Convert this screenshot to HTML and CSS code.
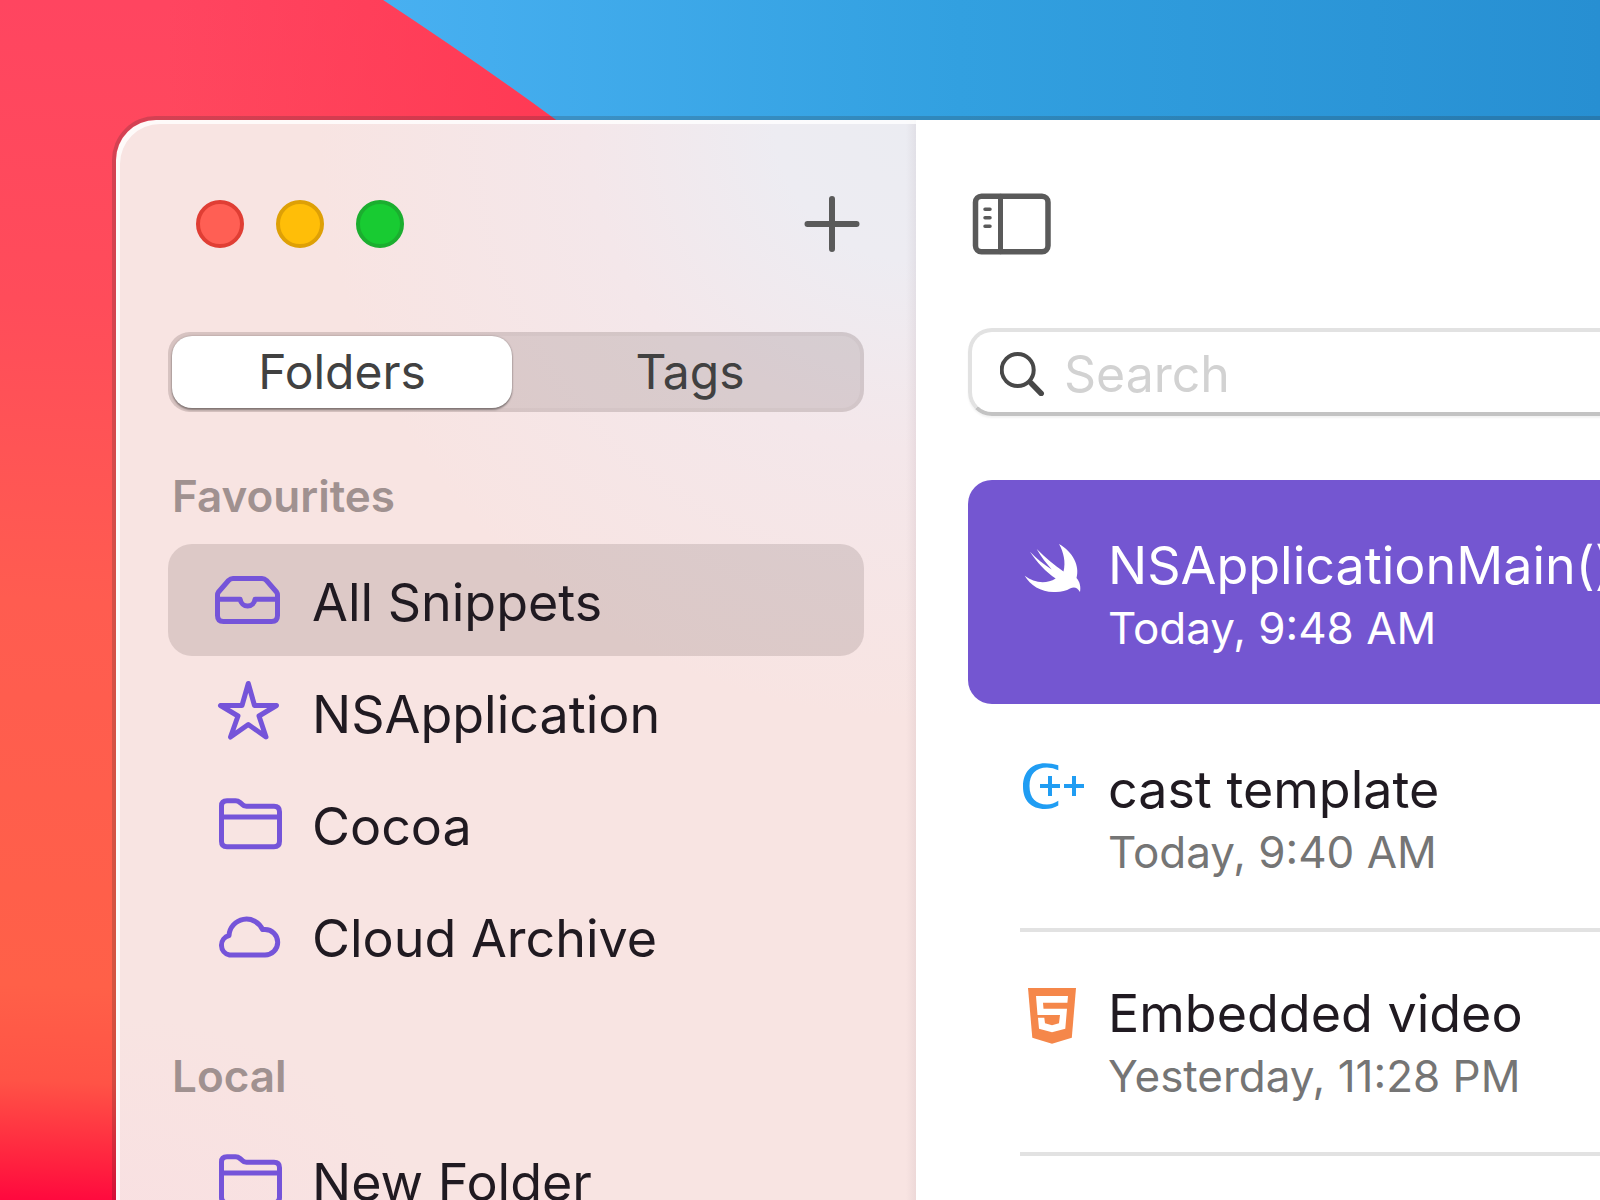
FILE: index.html
```html
<!DOCTYPE html>
<html lang="en">
<head>
<meta charset="utf-8">
<title>Snippets</title>
<link rel="stylesheet" href="styles.css">
</head>
<body>
<svg class="wallpaper" viewBox="0 0 1600 1200" preserveAspectRatio="none" aria-hidden="true">
  <defs>
    <linearGradient id="sky" x1="0" y1="0" x2="1" y2="0">
      <stop offset="0.24" stop-color="#48b0f1"/>
      <stop offset="0.6" stop-color="#32a0e0"/>
      <stop offset="1" stop-color="#278fd2"/>
    </linearGradient>
    <linearGradient id="dune" gradientUnits="userSpaceOnUse" x1="40" y1="0" x2="0" y2="1200">
      <stop offset="0" stop-color="#ff4560"/>
      <stop offset="0.25" stop-color="#ff4c5a"/>
      <stop offset="0.5" stop-color="#ff5c50"/>
      <stop offset="0.82" stop-color="#ff6048"/>
      <stop offset="0.9" stop-color="#ff5346"/>
      <stop offset="0.97" stop-color="#ff203f"/>
      <stop offset="1" stop-color="#ff083e"/>
    </linearGradient>
    <linearGradient id="glow" x1="0" y1="0" x2="1" y2="0">
      <stop offset="0.3" stop-color="#ff3853" stop-opacity="0"/>
      <stop offset="1" stop-color="#ff3853" stop-opacity="0.9"/>
    </linearGradient>
  </defs>
  <rect width="1600" height="1200" fill="url(#sky)"/>
  <path d="M0 0H383Q480 64 556 120L640 190V1200H0Z" fill="url(#dune)"/>
  <path d="M0 0H383Q480 64 556 120H0Z" fill="url(#glow)"/>
</svg>
<div class="window">
  <aside class="sidebar">
    <header class="titlebar">
      <div class="lights">
        <button class="light close" aria-label="Close"></button>
        <button class="light minimise" aria-label="Minimise"></button>
        <button class="light zoom" aria-label="Zoom"></button>
      </div>
      <button class="icon-button" aria-label="Add">
        <svg width="56" height="56" viewBox="0 0 56 56" fill="none" stroke="#5a5a5a" stroke-width="6" stroke-linecap="round"><path d="M28 3V53M3.500 28H52.500"/></svg>
      </button>
    </header>
    <div class="segments">
      <button class="segment selected">Folders</button>
      <button class="segment">Tags</button>
    </div>
    <nav>
      <h2>Favourites</h2>
      <ul>
        <li><a class="row selected" href="#all"><svg class="glyph" viewBox="0 0 64 56"><path d="M1.500 21V41.500Q1.500 47.500 7.500 47.500H55.500Q61.500 47.500 61.500 41.500V21Q61.500 19.500 60.500 18L50.500 6.500Q48.500 4.500 46 4.500H17Q14.500 4.500 12.500 6.500L2.500 18Q1.500 19.500 1.500 21M2 25.300H24.200A7.500 8 0 0 0 39 25.300H61"/></svg>All Snippets</a></li>
        <li><a class="row" href="#nsapplication"><svg class="glyph" viewBox="0 0 64 56"><path d="M32.300 -2.500L38.500 19.500H60.500L43 30L50 51L32.300 38.500L14.500 51L22 30L4.500 19.500H26Z"/></svg>NSApplication</a></li>
        <li><a class="row" href="#cocoa"><svg class="glyph" viewBox="0 0 64 56"><path id="folder" d="M5.500 43.300V8Q5.500 2.800 11 2.800H19.500Q22 2.800 24 4.500L26 6.200Q28 8.300 30.500 8.300H58Q63.500 8.300 63.500 13.800V43.300Q63.500 48.800 58 48.800H11Q5.500 48.800 5.500 43.300M5.500 19H63.500"/></svg>Cocoa</a></li>
        <li><a class="row" href="#cloud"><svg class="glyph" viewBox="0 0 64 56"><path d="M13.500 45H49A12.700 12.700 0 0 0 49 19.600H46.500A17.500 17.500 0 0 0 13 25.500A10 10 0 0 0 13.500 45Z"/></svg>Cloud Archive</a></li>
      </ul>
      <h2>Local</h2>
      <ul>
        <li><a class="row" href="#new"><svg class="glyph" viewBox="0 0 64 56"><use href="#folder"/></svg>New Folder</a></li>
      </ul>
    </nav>
  </aside>
  <main class="content">
    <header class="toolbar">
      <button class="icon-button" aria-label="Toggle sidebar">
        <svg width="88" height="64" viewBox="0 0 88 64" fill="none" stroke="#5a5a5a" stroke-width="5.500" stroke-linecap="round"><rect x="7.500" y="4.200" width="72.500" height="55.500" rx="6"/><path d="M32.500 4.200V59.700" stroke-width="5"/><path d="M17 17.300H22M17 25.700H22M17 34.300H22" stroke-width="3.500"/></svg>
      </button>
    </header>
    <label class="search">
      <svg width="48" height="48" viewBox="0 0 48 48" fill="none" stroke="#484848" stroke-width="4" stroke-linecap="round"><circle cx="17.700" cy="22" r="16"/><path d="M31 35L41.200 45.500" stroke-width="5.500"/></svg>
      <input type="search" placeholder="Search" aria-label="Search">
    </label>
    <ul class="snippets">
      <li class="snippet selected"><div class="entry">
        <svg class="lang" viewBox="0 0 64 64" fill="#fff"><path d="M39 12C53 20 60 34 56.500 46C60 50 61 55 60 60C57 55 54 54.500 50 56.500C46 59 40 60.500 33.300 60C21 60 10 53 4.700 43.700C14 51 26 52.500 35.700 46.500C26 40 16.500 30 10 19.700C16 26 24 32.500 31.700 37.500C27 32 21 25 16.700 17C26 26 34 33 43.500 39.500C46 30 43.500 20 39 12Z"/></svg>
        <div><h3>NSApplicationMain()</h3><time>Today, 9:48 AM</time></div>
      </div></li>
      <li class="snippet"><div class="entry">
        <svg class="lang" viewBox="0 0 64 64" fill="#209df3"><path d="M38.300 9.300V14.200Q33 11.500 27 11.500C16 11.500 9.500 18 9.500 30C9.500 42 16 48.500 27 48.500Q33 48.500 38.300 44.800V49.500Q32 53 25 53C11 53 3 44.500 3 30.500C3 16 11.500 7.300 25 7.300Q32 7.300 38.300 9.300Z"/><path d="M28 20H32V28H40V32H32V40H28V32H20V28H28ZM52 20H56V28H64V32H56V40H52V32H44V28H52Z"/></svg>
        <div><h3>cast template</h3><time>Today, 9:40 AM</time></div>
      </div></li>
      <li class="snippet"><div class="entry">
        <svg class="lang" viewBox="0 0 64 64"><path d="M8 8H56L51.800 57.700L32 63.700L12.300 57.700Z" fill="#f5874a"/><path d="M16 16H48L47.400 22.700H23L23.500 28.700H47L45.300 48.700L32 52.300L19 48.700L18 37.700H24.300L25 43.300L32 45.300L39 43.300L40 35H17.500Z" fill="#fff"/></svg>
        <div><h3>Embedded video</h3><time>Yesterday, 11:28 PM</time></div>
      </div></li>
      <li class="snippet"><div class="entry"></div></li>
    </ul>
  </main>
</div>
</body>
</html>
```
FILE: styles.css
```css
* { box-sizing: border-box; }
body {
  margin: 0;
  height: 100vh;
  overflow: hidden;
  font-family: Inter, "Liberation Sans", sans-serif;
  color: #201a21;
}
ul { list-style: none; margin: 0; padding: 0; }
button { border: 0; padding: 0; background: none; font: inherit; color: inherit; }
.wallpaper { position: absolute; inset: 0; width: 100%; height: 100%; z-index: -1; }
.window {
  display: flex;
  min-height: calc(100vh - 80px);
  margin: 120px -40px 0 116px;
  border-radius: 40px;
  box-shadow: 0 0 0 4px rgba(40, 40, 40, 0.2);
}
.sidebar {
  flex: 0 0 800px;
  padding: 0 52px;
  border-radius: 40px 0 0 0;
  background:
    linear-gradient(to left, rgba(90, 60, 80, 0.07), transparent 10px),
    radial-gradient(circle at 100% 0, #ebecf2 0, #edecf2 140px, #f4e7ea 330px, rgba(248, 229, 230, 0) 600px),
    radial-gradient(circle at 0 100%, #f9dde1 0, rgba(248, 224, 224, 0) 360px),
    #f8e4e2;
  box-shadow: inset 4px 4px 0 rgba(255, 255, 255, 0.8);
}
.titlebar, .toolbar { display: flex; justify-content: space-between; align-items: center; height: 208px; }
.titlebar { padding: 0 4px 0 28px; margin-bottom: 4px; }
.lights { display: flex; gap: 32px; }
.light { width: 48px; height: 48px; border-radius: 50%; border: 4px solid; }
.close { background: #ff5f54; border-color: #e03e34; }
.minimise { background: #ffbe08; border-color: #dea006; }
.zoom { background: #18cb32; border-color: #1bae2f; }
.icon-button { display: flex; }
.segments {
  display: flex;
  gap: 8px;
  height: 80px;
  padding: 4px;
  border-radius: 22px;
  background: rgba(80, 60, 60, 0.16);
  box-shadow: inset 0 0 0 4px rgba(80, 60, 60, 0.04);
}
.segment { flex: 1; font-size: 48px; line-height: 72px; color: #414141; border-radius: 20px; }
.segment.selected { background: #fff; box-shadow: 0 0 2px rgba(0, 0, 0, 0.3), 0 2px 2px rgba(0, 0, 0, 0.35); }
h2 { margin: 0; padding: 54px 0 18px 4px; font-size: 44px; line-height: 60px; font-weight: 600; color: #a09190; }
.row {
  display: flex;
  align-items: center;
  gap: 32px;
  height: 112px;
  padding: 4px 48px 0;
  border-radius: 24px;
  font-size: 52px;
  color: inherit;
  text-decoration: none;
}
.row.selected { background: rgba(80, 60, 60, 0.16); }
.glyph { width: 64px; height: 56px; overflow: visible; fill: none; stroke: #7554d9; stroke-width: 5px; stroke-linecap: round; stroke-linejoin: round; }
.content { flex: 1; min-width: 0; padding-left: 52px; background: #fff; }
.search {
  display: flex;
  align-items: center;
  gap: 16px;
  height: 88px;
  padding: 0 28px;
  border: 4px solid #e2e2e2;
  border-bottom-color: #c3c3c3;
  border-radius: 24px;
  box-shadow: 0 2px 2px rgba(0, 0, 0, 0.05);
}
.search input { flex: 1; min-width: 0; border: 0; padding: 4px 0 0; outline: 0; background: none; font: inherit; font-size: 50px; }
.search input::placeholder { color: #d2d2d2; }
.snippets { padding-top: 64px; }
.snippet { padding-left: 52px; border-radius: 24px; }
.snippet.selected { background: #7456d1; color: #fff; }
.entry { display: flex; gap: 24px; height: 224px; padding-top: 48px; border-top: 4px solid transparent; }
.snippet:nth-child(n+3) .entry { border-top-color: #e2e2e2; }
.lang { width: 64px; height: 64px; }
h3 { margin: 0; font-size: 52px; line-height: 68px; font-weight: 400; }
time { display: block; font-size: 44px; line-height: 56px; color: #757575; }
.selected time { color: #fff; }
```
